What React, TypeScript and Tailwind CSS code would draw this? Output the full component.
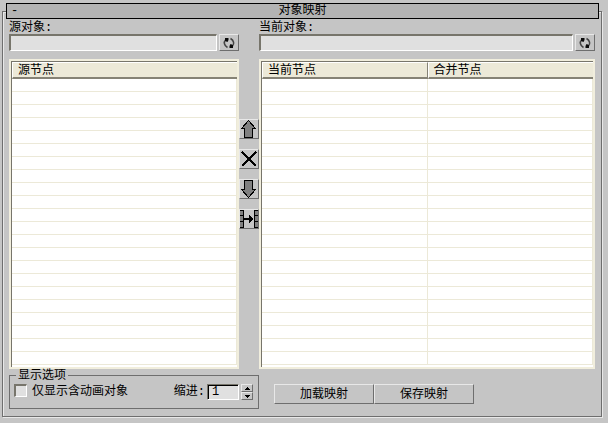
import React, { useState } from 'react'

const ROW_COUNT = 22

const raised = 'border border-t-[#e8e8e8] border-l-[#e8e8e8] border-b-[#6e6e6e] border-r-[#6e6e6e] bg-[#c5c5c5]'
const sunken = 'border-t-2 border-l-2 border-b border-r border-t-[#77756b] border-l-[#77756b] border-b-white border-r-white bg-[#e0e0e0] outline-none'
const sunkenDark = 'border border-t-[#77756b] border-l-[#77756b] border-b-white border-r-white bg-[#e0e0e0] shadow-[inset_1px_1px_0_#000] outline-none'

const RefreshIcon = () => (
  <svg width="12" height="12" viewBox="0 0 12 12" aria-hidden="true">
    <path d="M2.5 3C0.5 5 1 8.5 4.5 10.5M9.5 9C11.5 7 11 3.5 7.5 1.5" fill="none" stroke="#444" strokeWidth="1.5" />
    <path d="M2 1H5.5V3L4.5 5L2 4Z M10 11H6.5V9L7.5 7L10 8Z" fill="#0a0a0a" />
  </svg>
)

const UpIcon = () => (
  <svg width="18" height="18" viewBox="0 0 18 18" shapeRendering="crispEdges" aria-hidden="true">
    <path d="M8.5 0.5L15.5 8.5H12.5V17.5H4.5V8.5H1.5Z" fill="#808080" stroke="#000" />
  </svg>
)

const DownIcon = () => (
  <svg width="18" height="18" viewBox="0 0 18 18" shapeRendering="crispEdges" aria-hidden="true">
    <path d="M4.5 0.5H12.5V9.5H15.5L8.5 17.5L1.5 9.5H4.5Z" fill="#808080" stroke="#000" />
  </svg>
)

const CrossIcon = () => (
  <svg width="18" height="18" viewBox="0 0 18 18" shapeRendering="crispEdges" aria-hidden="true">
    <path d="M2 2L16 16M16 2L2 16" stroke="#000" strokeWidth="2" />
  </svg>
)

const MergeIcon = () => (
  <svg width="18" height="18" viewBox="0 0 18 18" shapeRendering="crispEdges" aria-hidden="true">
    <path d="M0 0h4v18h-4z M14 0h4v18h-4z" fill="#808080" />
    <path d="M0 0h4v1h-4z M0 5h4v1h-4z M0 11h4v1h-4z M0 17h4v1h-4z M3 0h1v18h-1z M14 0h4v1h-4z M14 5h4v1h-4z M14 11h4v1h-4z M14 17h4v1h-4z M14 0h1v18h-1z" fill="#000" />
    <path d="M4 8h5v-3h1v1h1v1h1v1h1v2h-1v1h-1v1h-1v1h-1v-3h-5z" fill="#000" />
  </svg>
)

const tools = [
  { label: '上移', Icon: UpIcon },
  { label: '删除', Icon: CrossIcon },
  { label: '下移', Icon: DownIcon },
  { label: '合并', Icon: MergeIcon },
]

interface ObjectFieldProps {
  id: string
  label: string
}

const ObjectField: React.FC<ObjectFieldProps> = ({ id, label }) => {
  const [value, setValue] = useState('')

  return (
    <div>
      <label htmlFor={id} className="block h-[15px] leading-[18px]">{label}</label>
      <div className="flex gap-0.5">
        <input
          id={id}
          value={value}
          onChange={(e) => setValue(e.target.value)}
          className={`h-[17px] min-w-0 flex-1 px-1 ${sunken}`}
        />
        <button aria-label="刷新" className={`flex h-[17px] w-5 items-center justify-center ${raised}`}>
          <RefreshIcon />
        </button>
      </div>
    </div>
  )
}

const NodeTable: React.FC<{ columns: string[] }> = ({ columns }) => (
  <div className="border-2 border-[#f1eedd]">
    <div className="border-t border-l border-[#77756b] bg-white pb-0.5">
      <table className="w-full table-fixed border-separate border-spacing-0">
        <thead>
          <tr>
            {columns.map((name) => (
              <th
                key={name}
                className="h-[17px] border-t border-b-2 border-l border-r border-t-white border-b-[#858275] border-l-white border-r-[#858275] bg-[#ece9d8] p-0 pt-0.5 pl-[5px] text-left leading-3 font-normal last:border-r-0"
              >
                {name}
              </th>
            ))}
          </tr>
        </thead>
        <tbody>
          {Array.from({ length: ROW_COUNT }, (_, row) => (
            <tr key={row}>
              {columns.map((name) => (
                <td key={name} className="h-[13px] border-r border-b border-[#ece9d8] p-0" />
              ))}
            </tr>
          ))}
        </tbody>
      </table>
    </div>
  </div>
)

export default function App() {
  const [animatedOnly, setAnimatedOnly] = useState(false)
  const [indent, setIndent] = useState(1)

  return (
    <main className="min-h-screen bg-[#c5c5c5] px-[2px] pt-[3px] font-['Liberation_Mono','Noto_Sans_CJK_SC',monospace] text-[12px] leading-4 text-black">
      <div className="relative mr-1">
        {/* Etched frame behind the rollout header */}
        <div className="absolute inset-x-0 top-2 bottom-0 border border-[#6e6e6e] shadow-[1px_1px_0_#e8e8e8,inset_1px_1px_0_#e8e8e8]" />

        <div className="relative px-1 pb-2">
          <div className="-mr-px bg-[#c5c5c5]">
            <button className="relative block h-4 w-full border border-black bg-[#b3b3b3] leading-[14px]">
              <span className="absolute left-1">-</span>
              对象映射
            </button>
          </div>

          <div className="grid grid-cols-[230fr_20px_336fr] px-[3px]">
            <ObjectField id="source" label="源对象:" />
            <div />
            <ObjectField id="current" label="当前对象:" />

            <div className="mt-2">
              <NodeTable columns={['源节点']} />
            </div>
            <div className="flex flex-col gap-2.5 pt-[68px]">
              {tools.map(({ label, Icon }) => (
                <button key={label} aria-label={label} className={`h-5 w-5 ${raised}`}>
                  <Icon />
                </button>
              ))}
            </div>
            <div className="mt-2">
              <NodeTable columns={['当前节点', '合并节点']} />
            </div>
          </div>

          <div className="flex items-start gap-[15px] px-[3px]">
            <fieldset className="h-10 w-[250px] border border-[#6e6e6e] px-1">
              <legend className="ml-0.5 h-3 px-0.5 leading-[14px]">显示选项</legend>
              <div className="flex h-[22px] items-center">
                <input
                  id="animated"
                  type="checkbox"
                  checked={animatedOnly}
                  onChange={(e) => setAnimatedOnly(e.target.checked)}
                  className={`mt-[3px] h-[13px] w-[13px] appearance-none self-start checked:bg-[#555] ${sunken}`}
                />
                <label htmlFor="animated" className="ml-[5px]">仅显示含动画对象</label>
                <label htmlFor="indent" className="mr-0.5 ml-auto">缩进:</label>
                <input
                  id="indent"
                  value={indent}
                  onChange={(e) => setIndent(Number(e.target.value) || 0)}
                  className={`h-4 w-8 px-1 ${sunkenDark}`}
                />
                <div className="mr-px ml-0.5 flex flex-col">
                  <button aria-label="增加" onClick={() => setIndent(indent + 1)} className={`flex h-2 w-3 items-center justify-center ${raised}`}>
                    <svg width="5" height="3" viewBox="0 0 5 3" shapeRendering="crispEdges"><path d="M2 0h1v1h1v1h1v1h-5v-1h1v-1h1z" /></svg>
                  </button>
                  <button aria-label="减少" onClick={() => setIndent(indent - 1)} className={`flex h-2 w-3 items-center justify-center ${raised}`}>
                    <svg width="5" height="3" viewBox="0 0 5 3" shapeRendering="crispEdges"><path d="M0 0h5v1h-1v1h-1v1h-1v-1h-1v-1h-1z" /></svg>
                  </button>
                </div>
              </div>
            </fieldset>
            <div className="flex pt-[15px]">
              <button className={`h-5 w-[100px] pt-0.5 leading-4 ${raised}`}>加载映射</button>
              <button className={`h-5 w-[100px] pt-0.5 leading-4 ${raised}`}>保存映射</button>
            </div>
          </div>
        </div>
      </div>
    </main>
  )
}
